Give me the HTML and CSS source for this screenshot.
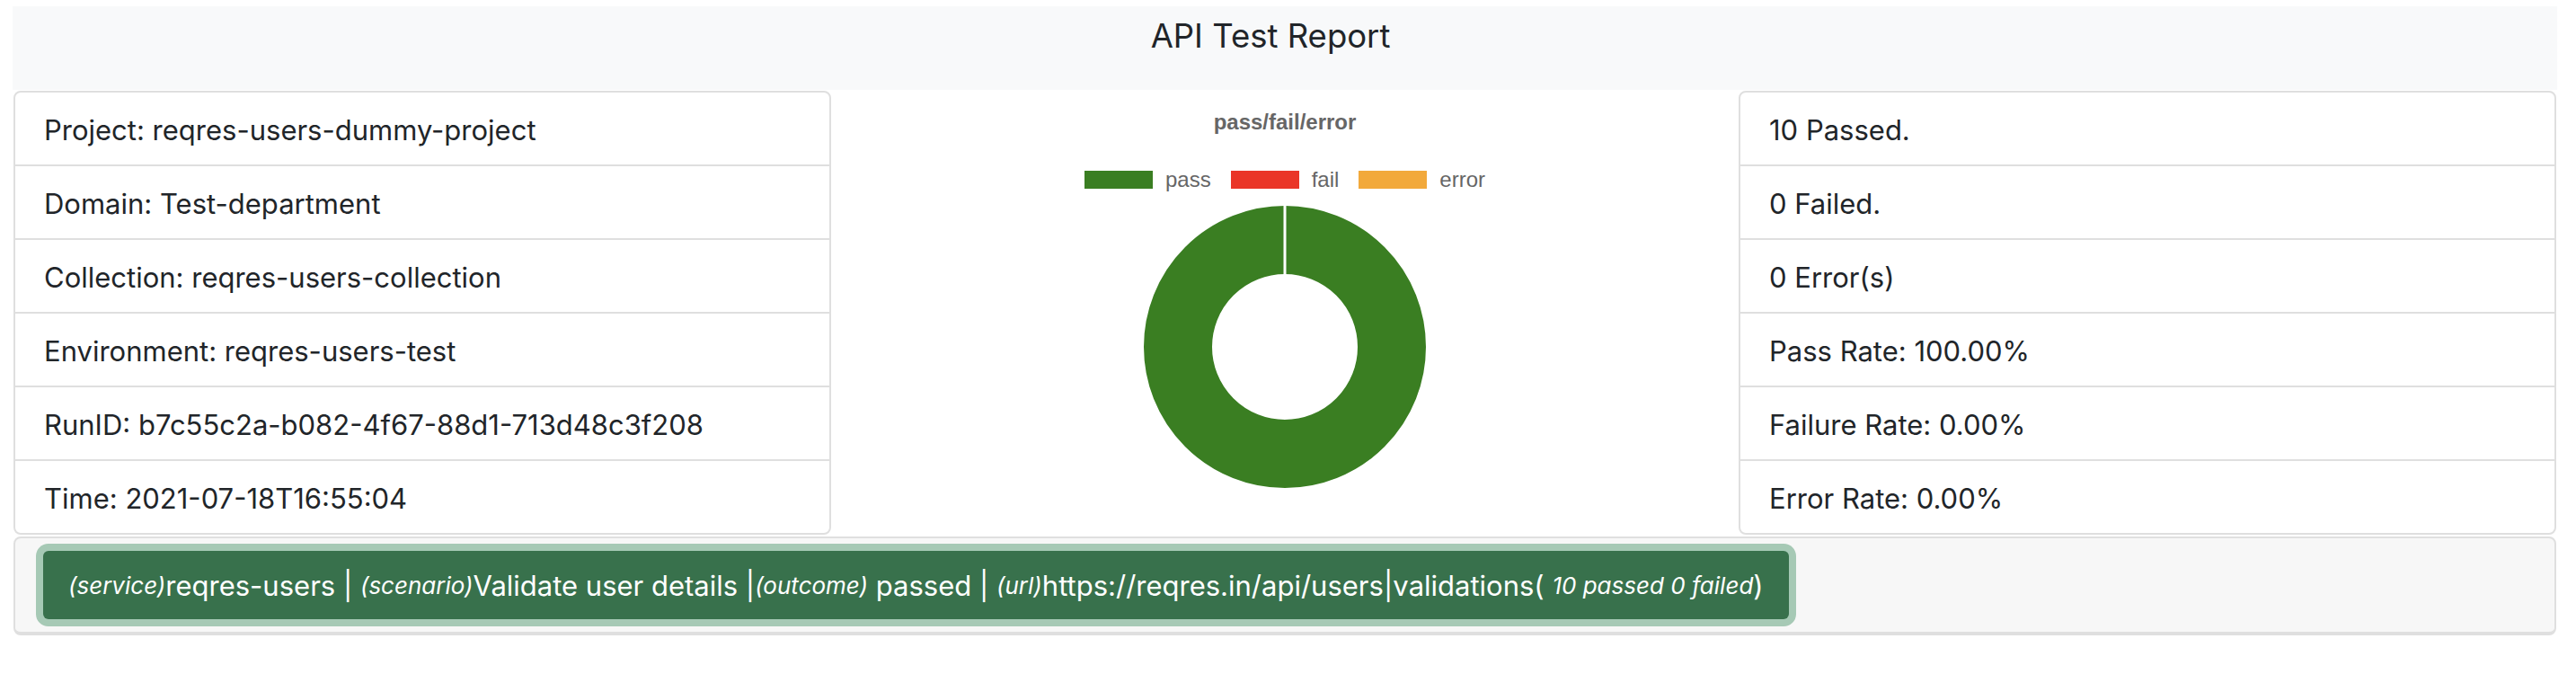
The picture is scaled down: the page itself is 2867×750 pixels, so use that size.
FILE: index.html
```html
<!DOCTYPE html>
<html>
<head>
<meta charset="utf-8">
<title>API Test Report</title>
<link rel="stylesheet" href="styles.css">
</head>
<body>
<div class="page">
  <header class="header"><h4 class="title">API Test Report</h4></header>
  <section class="summary">
    <ul class="list">
      <li class="item">Project: reqres-users-dummy-project</li>
      <li class="item">Domain: Test-department</li>
      <li class="item">Collection: reqres-users-collection</li>
      <li class="item">Environment: reqres-users-test</li>
      <li class="item">RunID: b7c55c2a-b082-4f67-88d1-713d48c3f208</li>
      <li class="item">Time: 2021-07-18T16:55:04</li>
    </ul>
    <div class="chart">
      <div class="chart-title">pass/fail/error</div>
      <div class="legend">
        <span class="legend-item"><span class="swatch swatch-pass"></span>pass</span>
        <span class="legend-item"><span class="swatch swatch-fail"></span>fail</span>
        <span class="legend-item"><span class="swatch swatch-error"></span>error</span>
      </div>
      <svg class="donut" width="316" height="316" viewBox="0 0 316 316">
        <circle cx="158" cy="158" r="119" fill="none" stroke="#3a7e22" stroke-width="76"/>
        <rect x="156.5" y="0" width="3" height="78" fill="#ffffff"/>
      </svg>
    </div>
    <ul class="list">
      <li class="item">10 Passed.</li>
      <li class="item">0 Failed.</li>
      <li class="item">0 Error(s)</li>
      <li class="item">Pass Rate: 100.00%</li>
      <li class="item">Failure Rate: 0.00%</li>
      <li class="item">Error Rate: 0.00%</li>
    </ul>
  </section>
  <section class="results">
    <div class="result-btn"><small class="tag">(service)</small>reqres-users | <small class="tag">(scenario)</small>Validate user details |<small class="tag">(outcome)</small> passed | <small class="tag">(url)</small>https://reqres.in/api/users|validations( <small class="tag">10 passed 0 failed</small>)</div>
  </section>
</div>
</body>
</html>
```
FILE: styles.css
```css
* { box-sizing: border-box; }
html, body { margin: 0; padding: 0; background: #ffffff; }
body { font-family: "Inter", "Liberation Sans", sans-serif; color: #212529; }
.page { padding: 7px 21px 0 14px; }

.header {
  background: #f8f9fa;
  height: 93px;
  padding: 11px 32px 0 0;
}
.title {
  margin: 0;
  text-align: center;
  font-weight: 400;
  font-size: 36.5px;
  line-height: 44px;
}

.summary {
  display: grid;
  grid-template-columns: 910px 1fr 910px;
  margin: 1px 1px 0 1px;
}
.list {
  list-style: none;
  margin: 0;
  padding: 0;
  border: 2px solid #dfdfdf;
  border-radius: 8px;
}
.item {
  height: 80px;
  display: flex;
  align-items: center;
  padding: 2px 32px 0 32px;
  font-size: 31px;
}
.item + .item { border-top: 2px solid #dfdfdf; height: 82px; }

.chart {
  display: flex;
  flex-direction: column;
  align-items: center;
  font-family: "Liberation Sans", Arial, sans-serif;
  color: #666666;
}
.chart-title {
  font-weight: 700;
  font-size: 24px;
  line-height: 28px;
  margin-top: 21px;
}
.legend {
  display: flex;
  gap: 22px;
  margin-top: 36px;
  font-size: 24px;
  line-height: 28px;
}
.legend-item { display: flex; align-items: center; gap: 14px; }
.swatch { display: inline-block; width: 76px; height: 20px; }
.swatch-pass { background: #3a7e22; }
.swatch-fail { background: #ea3527; }
.swatch-error { background: #f2a93b; }
.donut { display: block; margin-top: 14px; }

.results {
  margin: 2px 1px 0 1px;
  background: #f7f7f7;
  border: 2px solid #dfdfdf;
  border-bottom-width: 4px;
  border-radius: 8px;
  padding: 14px 31px 14px 31px;
  display: flex;
}
.result-btn {
  background: #38714c;
  color: #ffffff;
  border-radius: 6px;
  box-shadow: 0 0 0 8px #a6c9b5;
  height: 76px;
  display: flex;
  align-items: center;
  padding: 0 28px;
  font-size: 31px;
  white-space: pre;
}
.tag { font-style: italic; font-size: 26px; }
```
